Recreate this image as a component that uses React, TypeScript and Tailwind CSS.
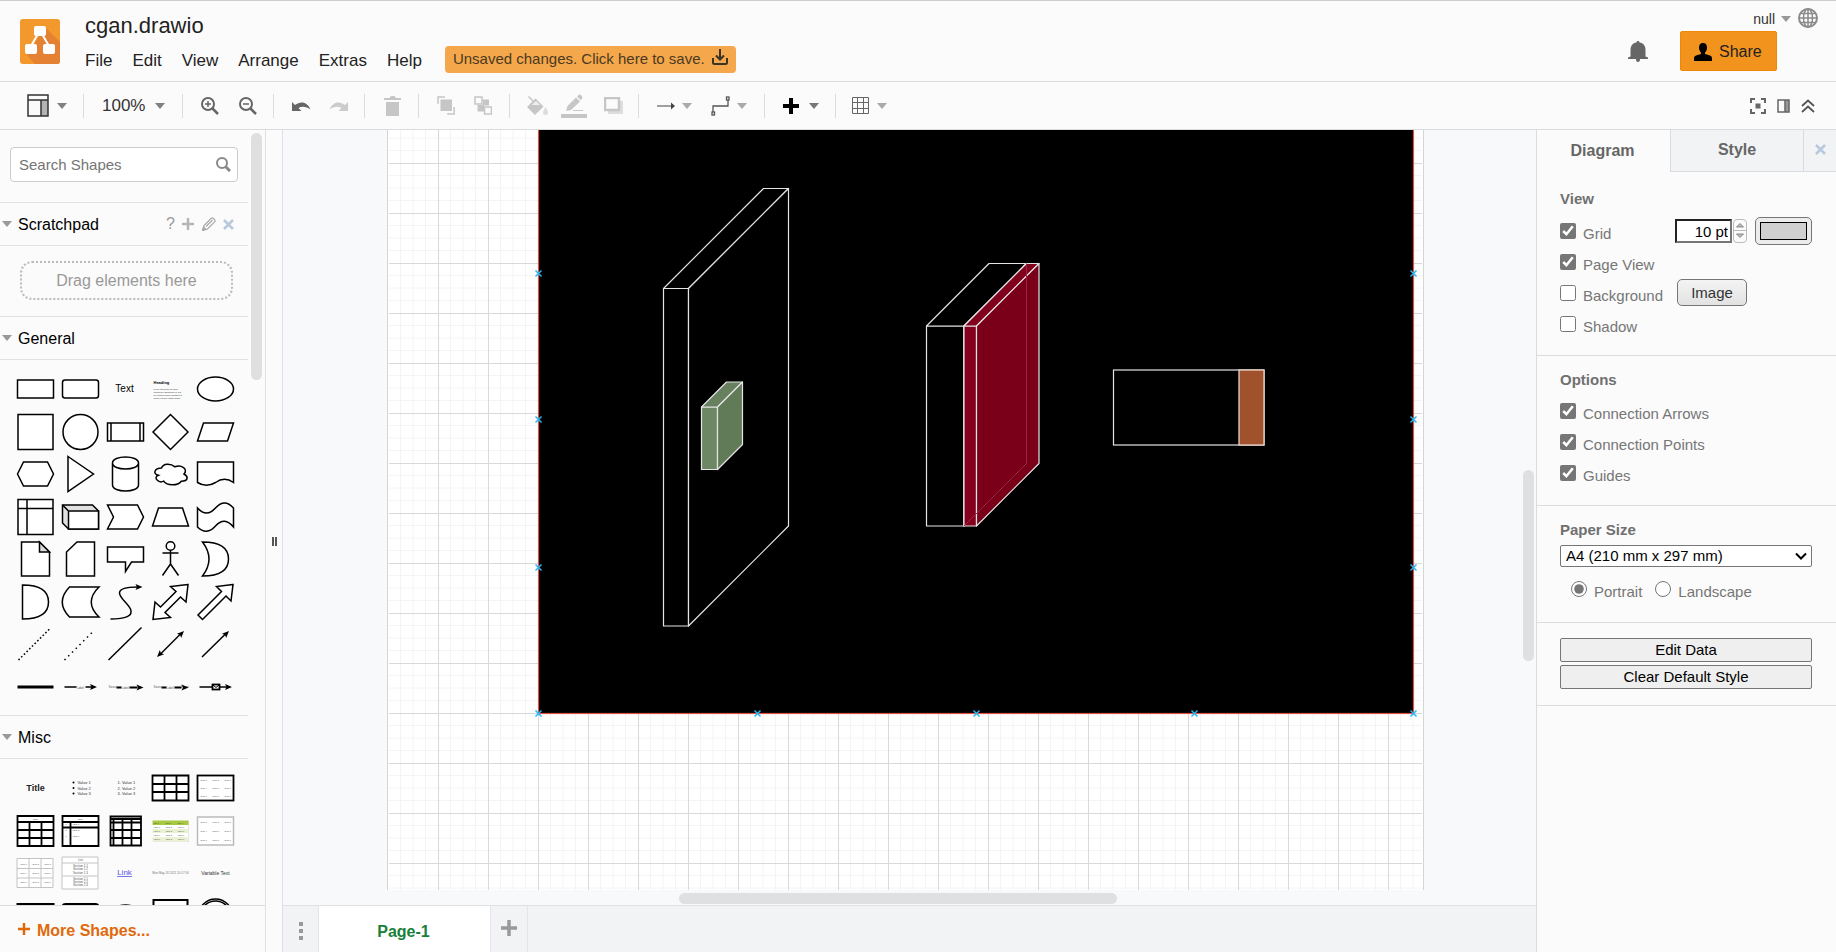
import { useState, type ReactNode } from "react";
import clsx from "clsx";

const MENUS = ["File", "Edit", "View", "Arrange", "Extras", "Help"];

const INK = { fill: "#fff", stroke: "#000", strokeWidth: 1.5 };

function Caret({ className = "text-[#808080]" }: { className?: string }) {
  return (
    <svg width="10" height="6" className={clsx("shrink-0", className)} aria-hidden>
      <path d="M0 0H10L5 6Z" fill="currentColor" />
    </svg>
  );
}

/* ---------- header ---------- */

function Logo() {
  return (
    <svg width="40" height="45" viewBox="0 0 40 45" className="shrink-0">
      <rect width="40" height="45" rx="3" fill="#f2982c" />
      <path d="M25 8L40 23V42Q40 45 37 45H15L7 36Z" fill="#e48132" />
      <path d="M18 15L11 27M22 15L29 27" stroke="#fff" strokeWidth="2" />
      <rect x="14" y="7" width="12" height="10" rx="2" fill="#fff" />
      <rect x="5" y="25" width="12" height="10" rx="2" fill="#fff" />
      <rect x="23" y="25" width="12" height="10" rx="2" fill="#fff" />
    </svg>
  );
}

function Header() {
  return (
    <header className="flex h-[82px] shrink-0 border-t border-b border-t-[#ccc] border-b-[#dadce0] pl-5">
      <div className="pt-[18px]">
        <Logo />
      </div>
      <div className="ml-[25px] flex flex-col pt-[9px]">
        <h1 className="text-[22px] leading-8 text-[#222]">cgan.drawio</h1>
        <div className="flex h-9 items-center">
          <nav className="flex gap-5 pt-[2px]">
            {MENUS.map((m) => (
              <button key={m} type="button" className="text-[17px] leading-6 text-[#222]">
                {m}
              </button>
            ))}
          </nav>
          <button
            type="button"
            className="-mt-[2px] ml-[23px] flex h-[27px] items-center gap-[7px] rounded bg-[#f5a74b] px-2 text-[15px] text-[#4a3a22]"
          >
            <span className="pt-px">Unsaved changes. Click here to save.</span>
            <svg width="16" height="16" fill="none" stroke="#3b3424" strokeWidth="2" className="-mt-1">
              <path d="M8 0V10M4 6.500L8 10.500L12 6.500M1 9V13.500Q1 15 2.500 15H13.500Q15 15 15 13.500V9" />
            </svg>
          </button>
        </div>
      </div>

      <div className="ml-auto flex flex-col items-end pt-[7px]">
        <div className="mr-[18px] flex h-5 items-center">
          <button type="button" className="flex items-center gap-[6px] pt-[2px] text-sm text-[#333]">
            null
            <Caret className="text-[#999]" />
          </button>
          <button type="button" aria-label="Language" className="ml-[7px]">
            <svg width="20" height="20" fill="none" stroke="#8a8a8a" strokeWidth="1.500">
              <circle cx="10" cy="10" r="9" strokeWidth="2" />
              <ellipse cx="10" cy="10" rx="4.500" ry="9" />
              <path d="M10 1V19M1 10H19M2.500 5.500H17.500M2.500 14.500H17.500" />
            </svg>
          </button>
        </div>
        <div className="mt-[3px] mr-[59px] flex items-center">
          <button type="button" aria-label="Notifications" className="mr-8">
            <svg width="20" height="21" fill="#666">
              <path d="M10 0C11 0 11.500 .6 11.500 1.500C15.500 2 17.500 5 17.500 9V15.500L20 16.500V18H12C12 20 11.500 21 10 21C8.500 21 8 20 8 18H0V16.500L2.500 15.500V9C2.500 5 4.500 2 8.500 1.500C8.500 .6 9 0 10 0Z" />
            </svg>
          </button>
          <button
            type="button"
            className="flex h-10 w-[97px] items-center gap-[7px] rounded-xs border border-[#f08705] bg-[#f2931e] pt-[2px] pl-[13px] text-base text-[#222]"
          >
            <svg width="18" height="18" fill="#000">
              <path d="M9 0C11.800 0 13 2 13 4.500C13 7 12 8.500 11 9.500V11L16 12.500Q18 13.200 18 15V18H0V15Q0 13.200 2 12.500L7 11V9.500C6 8.500 5 7 5 4.500C5 2 6.200 0 9 0Z" />
            </svg>
            Share
          </button>
        </div>
      </div>
    </header>
  );
}

/* ---------- toolbar ---------- */

function Group({ className, children }: { className: string; children: ReactNode }) {
  return (
    <div className={clsx("flex h-6 shrink-0 items-center border-r border-[#dadce0]", className)}>
      {children}
    </div>
  );
}

function Tool({ label, children }: { label: string; children: ReactNode }) {
  return (
    <button type="button" aria-label={label} className="flex shrink-0 items-center">
      {children}
    </button>
  );
}

function Zoom({ plus }: { plus?: boolean }) {
  return (
    <svg width="18" height="18" fill="none" stroke="#666">
      <circle cx="7" cy="7" r="6" strokeWidth="2" />
      <path d="M11.500 11.500L17 17" strokeWidth="2.500" />
      <path d={plus ? "M7 4V10M4 7H10" : "M4 7H10"} strokeWidth="1.500" />
    </svg>
  );
}

function Toolbar() {
  return (
    <div className="flex h-12 shrink-0 items-center border-b border-[#dadce0]">
      <Group className="w-[84px] gap-2 pl-[27px]">
        <Tool label="View layout">
          <svg width="22" height="23" fill="none" stroke="#333" strokeWidth="1.500">
            <rect x="14" y="6" width="7" height="16" fill="#b3b3b3" stroke="none" />
            <path d="M1 1H21V22H1ZM1 6H21M14 6V22" />
          </svg>
        </Tool>
        <Caret />
      </Group>
      <Group className="w-[99px] pl-[18px]">
        <button type="button" className="flex items-center gap-[10px] text-[17px] text-[#333]">
          <span className="pt-px">100%</span>
          <Caret />
        </button>
      </Group>
      <Group className="w-[91px] gap-5 pl-[18px]">
        <Tool label="Zoom in"><Zoom plus /></Tool>
        <Tool label="Zoom out"><Zoom /></Tool>
      </Group>
      <Group className="w-[91px] gap-[18px] pl-[17px]">
        <Tool label="Undo">
          <svg width="20" height="12" fill="#666">
            <path d="M1 2V11H10.500L7.500 8C11 6 15.500 6.500 19.500 9.500C17 2.500 10 0 4 5Z" />
          </svg>
        </Tool>
        <Tool label="Redo">
          <svg width="20" height="12" fill="#ccc">
            <path d="M19 2V11H9.500L12.500 8C9 6 4.500 6.500 .5 9.500C3 2.500 10 0 16 5Z" />
          </svg>
        </Tool>
      </Group>
      <Group className="w-[54px] justify-center pl-px">
        <Tool label="Delete">
          <svg width="17" height="20" fill="#c6c6c6">
            <path d="M0 2H5.500L7 0H10.500L12 2H17V4H0ZM2 6H15V20H2Z" />
          </svg>
        </Tool>
      </Group>
      <Group className="w-[91px] gap-[19px] pl-[18px]">
        <Tool label="To front">
          <svg width="18" height="19" fill="none" stroke="#c6c6c6" strokeWidth="1.500">
            <rect x="3.500" y="3.500" width="11.500" height="11.500" fill="#c6c6c6" stroke="none" />
            <path d="M2 7H1V1H7V2M11 17V18H17.200V12H16" />
          </svg>
        </Tool>
        <Tool label="To back">
          <svg width="18" height="19" fill="none" stroke="#c6c6c6" strokeWidth="1.500">
            <path d="M9 3.500H15V9.500H10V15.500H3.500V9H9Z" fill="#c6c6c6" stroke="none" />
            <rect x="1" y="1" width="7" height="7" />
            <rect x="10.500" y="11" width="7" height="7" />
          </svg>
        </Tool>
      </Group>
      <Group className="w-[129px] pl-[17px]">
        <Tool label="Fill color">
          <svg width="21" height="20" fill="#c6c6c6">
            <path d="M9 3L16.500 10.500L8 19L0 11Z" />
            <path d="M1.500 .5L9 8M9 3L3 9" stroke="#c6c6c6" strokeWidth="1.500" />
            <path d="M9 5L13 9H4.500Z" fill="#eee" />
            <path d="M18.500 11Q21 15 21 16.500A2.500 2.500 0 0 1 16 16.500Q16 15 18.500 11Z" fill="#ddd" />
          </svg>
        </Tool>
        <div className="ml-[13px] flex">
          <Tool label="Line color">
            <svg width="26" height="24" fill="#c6c6c6">
              <path d="M5 17L6.500 12L15 3.500L19 7.500L10 16ZM16 2.500L18 .8Q19 .2 20.500 1.500Q22 3 21 4.500L19.800 6.300Z" />
              <rect x="12" y="16" width="10" height="1" />
              <rect y="20" width="26" height="4" />
            </svg>
          </Tool>
        </div>
        <div className="ml-[17px] flex">
          <Tool label="Shadow">
            <svg width="19" height="17">
              <path d="M4 4H19V17H4Z" fill="#ddd" />
              <rect x="1" y="1" width="14" height="12" fill="#fbfbfb" stroke="#c6c6c6" strokeWidth="2.500" />
            </svg>
          </Tool>
        </div>
      </Group>
      <Group className="w-[126px] gap-[7px] pl-[18px]">
        <Tool label="Connection">
          <svg width="18" height="8" fill="#444">
            <path d="M0 3.500H14V0.500L18 4L14 7.500V4.500H0Z" />
          </svg>
        </Tool>
        <Caret className="text-[#aaa]" />
        <div className="ml-3 flex">
          <Tool label="Waypoints">
            <svg width="19" height="20" fill="none" stroke="#555" strokeWidth="1.300">
              <path d="M2 16V10H17V4" />
              <rect x="1" y="16" width="2.500" height="3" />
              <rect x="15.500" y="1" width="2.500" height="3" />
            </svg>
          </Tool>
        </div>
        <Caret className="text-[#aaa]" />
      </Group>
      <Group className="w-[71px] gap-[10px] pl-[18px]">
        <Tool label="Insert">
          <svg width="16" height="16" stroke="#000" strokeWidth="4">
            <path d="M8 0V16M0 8H16" />
          </svg>
        </Tool>
        <Caret className="text-[#777]" />
      </Group>
      <div className="flex items-center gap-2 pl-4">
        <Tool label="Table">
          <svg width="17" height="17" fill="none" stroke="#666" strokeWidth="1">
            <path d="M.5 .5H16.500V16.500H.5ZM5.500 .5V16.500M11.500 .5V16.500M.5 5.500H16.500M.5 11.500H16.500" />
          </svg>
        </Tool>
        <Caret className="text-[#aaa]" />
      </div>

      <div className="ml-auto flex items-center gap-[11px] pr-[21px]">
        <Tool label="Fullscreen">
          <svg width="16" height="16" fill="none" stroke="#666" strokeWidth="2">
            <path d="M1 5V1H5M11 1H15V5M15 11V15H11M5 15H1V11" />
            <rect x="5.500" y="5.500" width="5" height="5" fill="#666" stroke="none" />
          </svg>
        </Tool>
        <Tool label="Format panel">
          <svg width="13" height="14" fill="none" stroke="#666" strokeWidth="1.500">
            <rect x="8" y="1" width="4" height="12" fill="#999" stroke="none" />
            <path d="M1 1H12V13H1ZM8 1V13" />
          </svg>
        </Tool>
        <Tool label="Collapse">
          <svg width="14" height="14" fill="none" stroke="#555" strokeWidth="1.800">
            <path d="M1 7L7 1.500L13 7M1 13L7 7.500L13 13" />
          </svg>
        </Tool>
      </div>
    </div>
  );
}

/* ---------- shape palette ---------- */

// 3x3 block of tiny cell captions, centred on the origin
function Cells({ dy = 8 }: { dy?: number }) {
  return (
    <g fill="#444" stroke="none" fontSize="2" textAnchor="middle">
      {[0, 1, 2, 3, 4, 5, 6, 7, 8].map((i) => (
        <text key={i} x={((i % 3) - 1) * 12} y={(Math.floor(i / 3) - 1) * dy + 1}>
          Value {i + 1}
        </text>
      ))}
    </g>
  );
}

const head = (x: number, y: number, deg: number) => (
  <path d="M0 0L-7 -3L-5.500 0L-7 3Z" fill="#000" stroke="none" transform={`translate(${x} ${y}) rotate(${deg})`} />
);

// every drawing below is centred on 0,0 in a 45x42 cell
const GENERAL: [string, ReactNode][] = [
  ["Rectangle", <rect x="-18" y="-9" width="36" height="18" />],
  ["Rounded Rectangle", <rect x="-18" y="-9" width="36" height="18" rx="2.500" />],
  ["Text", <text textAnchor="middle" x="-1" y="3" fontSize="10" fill="#000" stroke="none">Text</text>],
  [
    "Textbox",
    <g stroke="none" fill="#333">
      <text x="-17" y="-5" fontSize="4" fontWeight="bold" fill="#000">Heading</text>
      <g fontSize="2">
        <text x="-17" y="1">Lorem ipsum dolor sit amet,</text>
        <text x="-17" y="4">consectetur adipisicing elit, sed</text>
        <text x="-17" y="7">do eiusmod tempor incididunt ut</text>
        <text x="-17" y="10">labore et dolore magna aliqua.</text>
      </g>
    </g>,
  ],
  ["Ellipse", <ellipse rx="18" ry="12" />],
  ["Square", <rect x="-17.500" y="-17.500" width="35" height="35" />],
  ["Circle", <circle r="17.500" />],
  ["Process", <path d="M-18 -9H18V9H-18ZM-14.500 -9V9M14.500 -9V9" />],
  ["Diamond", <path d="M0 -17.500L17.500 0L0 17.500L-17.500 0Z" />],
  ["Parallelogram", <path d="M-18 9L-12 -9H18L12 9Z" />],
  ["Hexagon", <path d="M-18 0L-12 -12H12L18 0L12 12H-12Z" />],
  ["Triangle", <path d="M-12.500 -17.500L13 0L-12.500 17.500Z" />],
  ["Cylinder", <path d="M-13 -11V11C-13 19 13 19 13 11V-11C13 -19 -13 -19 -13 -11C-13 -3 13 -3 13 -11" />],
  [
    "Cloud",
    <path d="M-9 -6C-16.200 -6 -18 0 -12.200 1.200C-18 3.800 -11.500 9.600 -6.800 7.200C-3.600 12 7.200 12 10.800 7.200C18 7.200 18 2.400 13.500 0C18 -4.800 10.800 -9.600 4.500 -7.200C0 -10.800 -7.200 -10.800 -9 -6Z" />,
  ],
  ["Document", <path d="M-18 -12H18V8.500Q9 2 0 8.500Q-9 14 -18 8.500Z" />],
  ["Internal Storage", <path d="M-17.500 -17.500H17.500V17.500H-17.500ZM-8.500 -17.500V17.500M-17.500 -8.500H17.500" />],
  [
    "Cube",
    <g>
      <path d="M-18 -12H12L18 -6V12H-12L-18 6Z" fill="#e0e0e0" />
      <path d="M-12 -6H18V12H-12ZM-12 -6L-18 -12" />
    </g>,
  ],
  ["Step", <path d="M-18 -12H12L18 0L12 12H-18L-12 0Z" />],
  ["Trapezoid", <path d="M-18 9L-12 -9H12L18 9Z" />],
  ["Tape", <path d="M-18 -9Q-9 1 0 -9Q9 -19 18 -9V10Q9 -1 0 9Q-9 19 -18 10Z" />],
  [
    "Note",
    <g>
      <path d="M-14 -17H4L14 -7V17H-14Z" />
      <path d="M4 -17V-7H14Z" fill="#ddd" />
    </g>,
  ],
  ["Card", <path d="M-3.500 -17H14V17H-14V-7Z" />],
  ["Callout", <path d="M-18 -12H18V3H6L0 12.500V3H-18Z" />],
  [
    "Actor",
    <g>
      <circle cy="-13" r="4.300" />
      <path d="M0 -8.500V5L-8 16.500M0 5L8 16.500M-8 -6H8" fill="none" />
    </g>,
  ],
  ["Or", <path d="M-13 -17Q13 -17 13 0Q13 17 -13 17Q0 0 -13 -17Z" />],
  ["And", <path d="M-13 -17Q13 -17 13 0Q13 17 -13 17Z" />],
  ["Data Storage", <path d="M-11 -15H18.500Q3 0 18.500 15H-11Q-25.500 0 -11 -15Z" />],
  [
    "Curve",
    <g>
      <path d="M-15 17C0 17 8 14 5 7C2 1 -6 -4 -6 -9C-6 -13 0 -15 12 -15" fill="none" />
      {head(17, -15, 0)}
    </g>,
  ],
  [
    "Bidirectional Arrow",
    <path d="M17.500 -17.500L0 -15.500L5.500 -10.500L-10 5L-15.500 0L-17.500 17.500L0 15.500L-5.500 10.500L10 -5L15.500 0Z" />,
  ],
  ["Arrow", <path d="M17.500 -17.500L1 -15.500L6 -10.500L-17.500 13L-13 17.500L10.500 -6L15.500 -1Z" />],
  ["Dashed Line", <path d="M-17 16L15 -16" strokeDasharray="1.600 2.200" />],
  ["Dotted Line", <path d="M-16 16L14 -14" strokeDasharray="1.500 3.800" />],
  ["Line", <path d="M-17 16L16 -16.500" />],
  [
    "Bidirectional Connector",
    <g>
      <path d="M-10 10L10 -10" />
      {head(13.5, -13, -45)}
      {head(-13.5, 13, 135)}
    </g>,
  ],
  [
    "Directional Connector",
    <g>
      <path d="M-13.500 13L10 -10" />
      {head(13.5, -13, -45)}
    </g>,
  ],
  ["Link", <path d="M-18 0H18" strokeWidth="3" />],
  [
    "Connector with Label",
    <g>
      <path d="M-16 0H-4M5 0H12" />
      <text x="-4" y="1.500" fontSize="3" fill="#555" stroke="none">Label</text>
      {head(16.5, 0, 0)}
    </g>,
  ],
  [
    "Connector with 2 Labels",
    <g>
      <path d="M-9 .5H-4M4 .5H12" strokeWidth="2" />
      <g fontSize="3" fill="#555" stroke="none">
        <text x="-17" y="1">Source</text>
        <text x="-4" y="1.500">Label</text>
      </g>
      {head(18, 0.5, 0)}
    </g>,
  ],
  [
    "Connector with 3 Labels",
    <g>
      <path d="M-9 .5H-4M4 .5H11" strokeWidth="2" />
      <g fontSize="3" fill="#555" stroke="none">
        <text x="-17" y="1">Source</text>
        <text x="-4" y="1.500">Label</text>
        <text x="10" y="1">Target</text>
      </g>
      {head(18, 0.5, 0)}
    </g>,
  ],
  [
    "Connector with Symbol",
    <g>
      <path d="M-16 0H12" />
      <rect x="-3" y="-2.500" width="7" height="5" strokeWidth="1.800" />
      <path d="M-3 -2.500L.5 .5L4 -2.500" fill="none" strokeWidth="1" />
      {head(16.5, 0, 0)}
    </g>,
  ],
];

const MISC: [string, ReactNode][] = [
  ["Title", <text textAnchor="middle" y="3" fontSize="9" fontWeight="bold" fill="#222" stroke="none">Title</text>],
  [
    "Unordered List",
    <g stroke="none" fill="#333" fontSize="4">
      {[1, 2, 3].map((n) => (
        <g key={n}>
          <circle cx="-7" cy={(n - 2) * 5.5} r="1" fill="#000" />
          <text x="-3" y={(n - 2) * 5.5 + 1.5}>Value {n}</text>
        </g>
      ))}
    </g>,
  ],
  [
    "Ordered List",
    <g stroke="none" fill="#333" fontSize="4">
      {[1, 2, 3].map((n) => (
        <text key={n} x="-8" y={(n - 2) * 5.5 + 1.5}>{n}. Value {n}</text>
      ))}
    </g>,
  ],
  [
    "Table",
    <path d="M-18 -12.500H18V12.500H-18ZM-6 -12.500V12.500M6 -12.500V12.500M-18 -4H18M-18 4H18" strokeWidth="1.800" />,
  ],
  [
    "Table with Values",
    <g>
      <rect x="-18" y="-12.500" width="36" height="25" strokeWidth="1.800" />
      <Cells />
    </g>,
  ],
  [
    "Table with Title",
    <g>
      <path d="M-18 -15H18V15H-18ZM-18 -9H18M-6 -9V15M6 -9V15M-18 -1H18M-18 7H18" strokeWidth="1.800" />
      <text y="-11.500" fontSize="2" textAnchor="middle" fill="#333" stroke="none">Table</text>
    </g>,
  ],
  [
    "Entity",
    <g>
      <path d="M-18 -15H18V15H-18ZM-18 -9H18M-18 -3.500H18M-10 -9V15" strokeWidth="1.800" />
      <g fontSize="2" fill="#333" stroke="none">
        <text y="-11.500" textAnchor="middle">Table</text>
        {[1, 2, 3].map((n) => (
          <text key={n} x="-15" y={n * 6 - 12}>{n}</text>
        ))}
        {[1, 2, 3].map((n) => (
          <text key={n} x="-8" y={n * 6 - 12}>Value {n}</text>
        ))}
      </g>
    </g>,
  ],
  [
    "Cross-Functional Table",
    <path d="M-15 -14.500H15.500V14.500H-15ZM-15 -12H15.500M-15 -8.500H15.500M-15 -1H15.500M-15 7H15.500M-12 -12V14.500M-3 -12V14.500M6 -12V14.500" strokeWidth="1.800" />,
  ],
  [
    "Green Table",
    <g stroke="none">
      <rect x="-17.500" y="-10" width="36" height="21" fill="#ccc" />
      <rect x="-18" y="-10.500" width="36" height="21" fill="#fff" />
      <rect x="-18" y="-10.500" width="36" height="4.500" fill="#a7c942" />
      <rect x="-18" y="-2" width="36" height="4" fill="#eaf2d3" />
      <rect x="-18" y="6" width="36" height="4.500" fill="#eaf2d3" />
      <g fontSize="2" fill="#444">
        {[0, 1, 2, 3, 4].map((r) =>
          [0, 1, 2].map((c) => (
            <text key={`${r}${c}`} x={c * 12 - 17} y={r * 4 - 7}>{r ? "Value" : "Title"} {c + 1}</text>
          ))
        )}
      </g>
    </g>,
  ],
  [
    "HTML Table 1",
    <g>
      <rect x="-18" y="-14" width="36" height="28" stroke="#bbb" />
      <Cells dy={9} />
    </g>,
  ],
  [
    "HTML Table 2",
    <g>
      <path d="M-18.500 -14.500H17.500V14.500H-18.500ZM-6.500 -14.500V14.500M5.500 -14.500V14.500M-18.500 -4.500H17.500M-18.500 5H17.500" stroke="#c3c3c3" strokeWidth="1" />
      <Cells dy={9} />
    </g>,
  ],
  [
    "HTML Table 3",
    <g>
      <path d="M-18.500 -16H17.500V16H-18.500ZM-18.500 -10H17.500M-18.500 3H17.500" stroke="#c3c3c3" strokeWidth="1" />
      <g fontSize="3" fill="#555" stroke="none" textAnchor="middle">
        <text y="-12">List</text>
        {[-6, -3, 1, 7, 10, 13].map((y, i) => (
          <text key={y} y={y}>Section {Math.floor(i / 3) + 1}.{(i % 3) + 1}</text>
        ))}
      </g>
    </g>,
  ],
  [
    "Hyperlink",
    <text textAnchor="middle" x="-1" y="2" fontSize="8" fill="#5555e6" stroke="none" textDecoration="underline">Link</text>,
  ],
  [
    "Timestamp",
    <text textAnchor="middle" y="1" fontSize="3" fill="#777" stroke="none">Mon May 24 2021 20:17:54</text>,
  ],
  ["Variable Text", <text textAnchor="middle" y="2" fontSize="5" fill="#333" stroke="none">Variable Text</text>],
  ["Double Rectangle", <rect x="-18" y="-12" width="36" height="24" strokeWidth="2" />],
  ["Double Rounded Rectangle", <rect x="-18" y="-12" width="36" height="24" rx="3" strokeWidth="2" />],
  ["Double Ellipse", <ellipse rx="16" ry="11" />],
  ["Double Square", <rect x="-17" y="-16" width="34" height="34" strokeWidth="2" />],
  [
    "Double Circle",
    <g>
      <circle r="17" />
      <circle r="15" />
    </g>,
  ],
];

function Palette({ items, className }: { items: [string, ReactNode][]; className: string }) {
  return (
    <div className={clsx("mt-2 ml-[13px] grid w-[225px] grid-cols-5 place-items-center", className)}>
      {items.map(([name, art]) => (
        <button key={name} type="button" aria-label={name} className="block">
          <svg width="45" height="42" viewBox="-22.500 -21 45 42" {...INK}>
            {art}
          </svg>
        </button>
      ))}
    </div>
  );
}

function SectionTitle({ title, children }: { title: string; children?: ReactNode }) {
  return (
    <div className="flex h-[43px] items-center border-b border-[#dfe1e5]">
      <button type="button" className="flex items-center gap-[6px] pl-[2px] text-base text-black">
        <Caret className="text-[#999]" />
        <span className="pt-px">{title}</span>
      </button>
      {children}
    </div>
  );
}

function Sidebar() {
  const [query, setQuery] = useState("");

  return (
    <aside className="flex w-[266px] shrink-0 flex-col border-r border-[#dfe1e5]">
      <div className="flex min-h-0 flex-1">
        <div className="w-[248px] overflow-hidden">
          <form
            onSubmit={(e) => e.preventDefault()}
            className="border-b border-[#dfe1e5] px-[10px] pt-[17px] pb-5"
          >
            <div className="flex h-[35px] items-center rounded border border-[#ccc] bg-white pr-[6px] pl-2">
              <input
                type="text"
                aria-label="Search Shapes"
                value={query}
                onChange={(e) => setQuery(e.target.value)}
                placeholder="Search Shapes"
                className="min-w-0 flex-1 pt-px text-[15px] outline-none placeholder:text-[#757575]"
              />
              <button type="submit" aria-label="Search">
                <svg width="15" height="15" fill="none" stroke="#888">
                  <circle cx="6" cy="6" r="5" strokeWidth="2" />
                  <path d="M9.500 9.500L14 14" strokeWidth="3" />
                </svg>
              </button>
            </div>
          </form>

          <SectionTitle title="Scratchpad">
            <div className="ml-auto flex items-center pr-[14px] text-[#999]">
              <button type="button" className="text-base">?</button>
              <button type="button" aria-label="Add" className="ml-[7px]">
                <svg width="12" height="12" stroke="#b5b5b5" strokeWidth="2.500">
                  <path d="M6 0V12M0 6H12" />
                </svg>
              </button>
              <button type="button" aria-label="Edit" className="ml-2">
                <svg width="14" height="14" fill="none" stroke="#aaa" strokeWidth="1.200">
                  <path d="M1 13L2 8.500L9.500 1Q10.500 .5 12 2Q13.500 3.500 13 4.500L5.500 12ZM4 9.500L10.500 3" />
                  <path d="M.5 13.500L1.500 10L4 12.500Z" fill="#999" />
                </svg>
              </button>
              <button type="button" aria-label="Close" className="ml-[7px]">
                <svg width="11" height="11" stroke="#b8c9de" strokeWidth="2.500">
                  <path d="M1 1L10 10M10 1L1 10" />
                </svg>
              </button>
            </div>
          </SectionTitle>
          <div className="border-b border-[#dfe1e5] pt-[15px] pr-[15px] pb-4 pl-5">
            <div className="flex h-[39px] items-center justify-center rounded-xl border-2 border-dotted border-[#bbb] text-base text-[#999]">
              Drag elements here
            </div>
          </div>

          <SectionTitle title="General" />
          <div className="border-b border-[#dfe1e5] pb-[7px]">
            <Palette items={GENERAL} className="h-[340px] grid-rows-8" />
          </div>

          <SectionTitle title="Misc" />
          <Palette items={MISC} className="h-[170px] grid-rows-4" />
        </div>
        {/* scrollbar */}
        <div className="flex-1 pt-[3px] pl-[3px]">
          <div className="h-[247px] w-[11px] rounded-full bg-[#dfdfdf]" />
        </div>
      </div>
      <button
        type="button"
        className="flex h-[47px] shrink-0 items-center gap-[7px] border-t border-[#dadce0] pl-[18px] text-base font-bold text-[#e0690c]"
      >
        <svg width="12" height="12" stroke="currentColor" strokeWidth="2.500">
          <path d="M6 0V12M0 6H12" />
        </svg>
        <span className="pt-[3px]">More Shapes...</span>
      </button>
    </aside>
  );
}

/* ---------- drawing area ---------- */

type CubeProps = {
  x: number;
  y: number;
  w: number;
  h: number;
  d: number;
  front: string;
  side: string;
  top: string;
};

// x, y is the upper left corner of the front face, d the depth to the upper right
function Cube({ x, y, w, h, d, front, side, top }: CubeProps) {
  return (
    <g stroke="#e4e4e4" strokeWidth="1.200" strokeLinejoin="round">
      <path d={`M${x} ${y}h${w}v${h}h${-w}z`} fill={front} />
      <path d={`M${x} ${y}l${d} ${-d}h${w}l${-d} ${d}z`} fill={top} />
      <path d={`M${x + w} ${y}l${d} ${-d}v${h}l${-d} ${d}z`} fill={side} />
    </g>
  );
}

const POINTS = [
  [150, 143], [150, 289], [150, 437], [150, 583],
  [369, 583], [588, 583], [806, 583],
  [1025, 583], [1025, 437], [1025, 289], [1025, 143],
];

function Drawing() {
  return (
    <svg width="100%" height="100%" className="block">
      <defs>
        <pattern id="grid" width="50" height="50" y="33" patternUnits="userSpaceOnUse">
          <path d="M12.500 0V50M25 0V50M37.500 0V50M0 12.500H50M0 25H50M0 37.500H50" stroke="#f4f4f4" />
          <path d="M.5 0V50M0 .5H50" stroke="#d9d9d9" />
        </pattern>
      </defs>
      <rect x="1" width="1033" height="100%" fill="url(#grid)" />

      <rect x="150.500" y="-4" width="875" height="587.500" fill="#000" stroke="#e0524c" strokeWidth="1.200" />

      <Cube x={275.5} y={158.5} w={25} h={337.5} d={100} front="#000" side="#000" top="#000" />
      <Cube x={313.5} y={277} w={16} h={62.5} d={25} front="#6d8764" side="#617b59" top="#67805e" />

      <Cube x={538.5} y={196} w={37.5} h={200} d={62.5} front="#000" side="#000" top="#000" />
      <Cube x={576} y={196} w={12.5} h={200} d={62.5} front="#85001f" side="#7a001a" top="#80001d" />
      <path d="M638.500 133.500V333.500L576 396" fill="none" stroke="#9c2440" />

      <rect x="725.500" y="240" width="150.500" height="75" fill="#000" stroke="#e4e4e4" strokeWidth="1.200" />
      <rect x="851" y="240" width="25" height="75" fill="#a0522d" stroke="#f0dcd0" strokeWidth="1.200" />

      {POINTS.map(([x, y]) => (
        <path
          key={`${x}-${y}`}
          d={`M${x - 2.5} ${y - 2.5}l6 6m0 -6l-6 6`}
          stroke="#29b6f2"
          strokeWidth="1.500"
        />
      ))}
    </svg>
  );
}

function Canvas() {
  return (
    <main className="flex min-w-0 flex-1 flex-col border-l border-[#dfe1e5] bg-[#f8f9fb]">
      <div className="flex min-h-0 flex-1 justify-between">
        <div className="ml-[104px] w-[1037px] overflow-hidden border-x border-[#d5d5d5] bg-white">
          <Drawing />
        </div>
        <div className="w-[13px] pt-[340px]">
          <div className="h-[191px] w-[11px] rounded-full bg-[#dee0e2]" />
        </div>
      </div>
      <div className="h-[15px] shrink-0 pt-[3px] pl-[396px]">
        <div className="h-[11px] w-[438px] rounded-full bg-[#dee0e2]" />
      </div>

      <div className="flex h-[47px] shrink-0 border-t border-[#dfe1e5] bg-[#f1f3f4]">
        <button type="button" aria-label="Pages" className="w-[35px] pt-1">
          <svg width="4" height="18" fill="#999" className="mx-auto">
            <path d="M0 0H4V4H0ZM0 7H4V11H0ZM0 14H4V18H0Z" />
          </svg>
        </button>
        <button
          type="button"
          className="w-[173px] border-x border-[#e3e5e8] bg-white pt-[5px] pr-[2px] text-base font-bold text-[#188038]"
        >
          Page-1
        </button>
        <button type="button" aria-label="Insert page" className="w-[37px] border-r border-[#e3e5e8] pb-[2px]">
          <svg width="16" height="16" stroke="#999" strokeWidth="3.500" className="mx-auto">
            <path d="M8 0V16M0 8H16" />
          </svg>
        </button>
      </div>
    </main>
  );
}

/* ---------- format panel ---------- */

function Check({ label, checked }: { label: string; checked?: boolean }) {
  return (
    <label className="flex items-center gap-[7px]">
      <input type="checkbox" defaultChecked={checked} className="size-4 accent-[#767676]" />
      <span className="pt-[6px]">{label}</span>
    </label>
  );
}

function FormatPanel() {
  return (
    <aside className="w-[300px] shrink-0 border-l border-[#dadce0] text-[15px] leading-5 text-[#767676]">
      <div className="flex h-[42px] text-base font-bold text-[#666]">
        <button type="button" className="w-[133px] pr-[2px]">Diagram</button>
        <button type="button" className="w-[133px] border-b border-l border-[#dadce0] bg-[#f1f3f4] pb-[2px]">
          Style
        </button>
        <button
          type="button"
          aria-label="Close"
          className="flex-1 border-b border-l border-[#dadce0] bg-[#f1f3f4] pb-[2px]"
        >
          <svg width="11" height="11" stroke="#b8c9de" strokeWidth="2.500" className="mx-auto">
            <path d="M1 1L10 10M10 1L1 10" />
          </svg>
        </button>
      </div>

      <section className="border-b border-[#dadce0] pt-3 pr-6 pb-4 pl-[23px]">
        <h2 className="flex h-[31px] items-center pb-px font-bold text-[#707070]">View</h2>
        <div className="flex h-[31px] items-center">
          <Check label="Grid" checked />
          <input
            type="text"
            aria-label="Grid size"
            defaultValue="10 pt"
            className="ml-auto h-6 w-[57px] border-2 border-t-[#222] border-r-[#767676] border-b-[#767676] border-l-[#222] bg-white pt-[2px] pr-[2px] text-right text-black"
          />
          <div className="ml-px flex h-6 w-[14px] flex-col overflow-hidden rounded border border-[#bbb]">
            <button type="button" aria-label="Increase" className="flex flex-1 items-center justify-center border-b border-[#bbb]">
              <svg width="10" height="6" fill="#bbb" stroke="#888"><path d="M1.500 5L5 1.500L8.500 5Z" /></svg>
            </button>
            <button type="button" aria-label="Decrease" className="flex flex-1 items-center justify-center">
              <svg width="10" height="6" fill="#bbb" stroke="#888"><path d="M1.500 1L5 4.500L8.500 1Z" /></svg>
            </button>
          </div>
          <button
            type="button"
            aria-label="Grid color"
            className="ml-2 h-7 w-[57px] rounded-[5px] border border-[#767676] bg-[#ececec] p-1"
          >
            <span className="block h-full border border-black bg-[#d0d0d0]" />
          </button>
        </div>
        <div className="flex h-[31px] items-center">
          <Check label="Page View" checked />
        </div>
        <div className="flex h-[31px] items-center">
          <Check label="Background" />
          <button
            type="button"
            className="ml-[14px] h-[27px] w-[70px] rounded-[5px] border border-[#767676] bg-linear-to-b from-[#f4f4f4] to-[#e2e2e2] text-[#333]"
          >
            Image
          </button>
        </div>
        <div className="flex h-[31px] items-center">
          <Check label="Shadow" />
        </div>
      </section>

      <section className="border-b border-[#dadce0] pt-2 pr-6 pb-[17px] pl-[23px]">
        <h2 className="flex h-[31px] items-center font-bold text-[#707070]">Options</h2>
        {["Connection Arrows", "Connection Points", "Guides"].map((o) => (
          <div key={o} className="flex h-[31px] items-center">
            <Check label={o} checked />
          </div>
        ))}
      </section>

      <section className="border-b border-[#dadce0] pt-2 pr-6 pb-[18px] pl-[23px]">
        <h2 className="flex h-[31px] items-center font-bold text-[#707070]">Paper Size</h2>
        <div className="relative">
          <select
            aria-label="Paper Size"
            className="block h-[22px] w-full appearance-none rounded-xs border border-[#767676] bg-white pl-[5px] leading-5 text-black"
          >
            <option>A4 (210 mm x 297 mm)</option>
            <option>A3 (297 mm x 420 mm)</option>
          </select>
          <svg
            width="12"
            height="8"
            fill="none"
            stroke="#000"
            strokeWidth="2"
            className="pointer-events-none absolute top-[7px] right-[5px]"
          >
            <path d="M1 1.500L6 6.500L11 1.500" />
          </svg>
        </div>
        <div className="mt-[6px] flex h-[31px] items-center gap-[13px] pl-[11px]">
          {["Portrait", "Landscape"].map((o) => (
            <label key={o} className="flex items-center gap-[7px]">
              <input
                type="radio"
                name="orientation"
                defaultChecked={o === "Portrait"}
                className="size-4 accent-[#767676]"
              />
              <span className="pt-[6px]">{o}</span>
            </label>
          ))}
        </div>
      </section>

      <section className="flex flex-col gap-[3px] border-b border-[#dadce0] pt-[15px] pr-6 pb-4 pl-[23px]">
        <button type="button" className="h-6 rounded-xs border border-[#767676] bg-[#efefef] text-black">
          Edit Data
        </button>
        <button type="button" className="h-6 rounded-xs border border-[#767676] bg-[#efefef] text-black">
          Clear Default Style
        </button>
      </section>
    </aside>
  );
}

export default function App() {
  return (
    <div className="flex h-screen flex-col overflow-hidden bg-[#fbfbfb] font-['Liberation_Sans',Arial,sans-serif]">
      <Header />
      <Toolbar />
      <div className="flex min-h-0 flex-1">
        <Sidebar />
        {/* splitter */}
        <div className="flex w-4 shrink-0 items-center justify-center pl-px">
          <svg width="5" height="9" fill="#555">
            <path d="M0 0H2V9H0ZM3 0H5V9H3Z" />
          </svg>
        </div>
        <Canvas />
        <FormatPanel />
      </div>
    </div>
  );
}
